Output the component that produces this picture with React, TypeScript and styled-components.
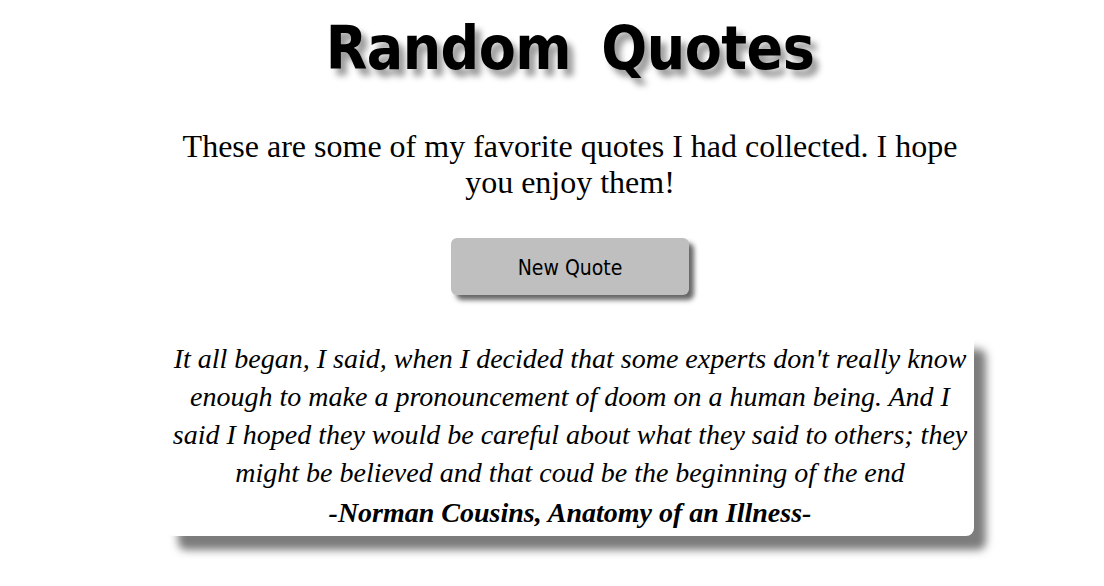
import React from "react";
import styled, { createGlobalStyle } from "styled-components";

const Global = createGlobalStyle`
  html, body { margin: 0; padding: 0; background: #ffffff; }
  body { font-family: "Liberation Serif", serif; }
`;

const Page = styled.main`
  margin-left: 36px;
  display: flex;
  flex-direction: column;
  align-items: center;
  padding: 12px 0 48px;
`;

const Title = styled.h1`
  margin: 0;
  font-family: "Comic Sans MS", "DejaVu Sans Condensed", "DejaVu Sans", sans-serif;
  font-weight: 700;
  font-size: 60px;
  line-height: 72px;
  letter-spacing: -0.5px;
  word-spacing: 12px;
  color: #000;
  text-shadow: 6px 7px 6px #9a9a9a;
`;

const Intro = styled.p`
  margin: 44px 0 0;
  width: 820px;
  text-align: center;
  font-family: "Liberation Serif", serif;
  font-size: 32px;
  line-height: 36px;
  color: #000;
`;

const Button = styled.button`
  margin-top: 38px;
  width: 238px;
  height: 57px;
  border: none;
  border-radius: 6px;
  background: #bfbfbf;
  box-shadow: 5px 5px 5px #666;
  font-family: "Comic Sans MS", "DejaVu Sans Condensed", "DejaVu Sans", sans-serif;
  font-size: 21px;
  padding-top: 4px;
  color: #000;
  cursor: pointer;
`;

const Card = styled.blockquote`
  margin: 40px 0 0;
  width: 808px;
  box-sizing: border-box;
  padding: 5px 0 4px;
  background: #fff;
  border-radius: 8px;
  box-shadow: 12px 14px 9px #7c7c7c;
  text-align: center;
  font-family: "Liberation Serif", serif;
  font-style: italic;
  font-size: 28px;
  line-height: 38px;
  color: #000;
`;

const Author = styled.div`
  margin-top: 2px;
  font-weight: 700;
`;

export default function App() {
  return (
    <>
      <Global />
      <Page>
        <Title>Random Quotes</Title>
        <Intro>
          These are some of my favorite quotes I had collected. I hope
          <br />
          you enjoy them!
        </Intro>
        <Button>New Quote</Button>
        <Card>
          It all began, I said, when I decided that some experts don't really know
          <br />
          enough to make a pronouncement of doom on a human being. And I
          <br />
          said I hoped they would be careful about what they said to others; they
          <br />
          might be believed and that coud be the beginning of the end
          <Author>-Norman Cousins, Anatomy of an Illness-</Author>
        </Card>
      </Page>
    </>
  );
}
